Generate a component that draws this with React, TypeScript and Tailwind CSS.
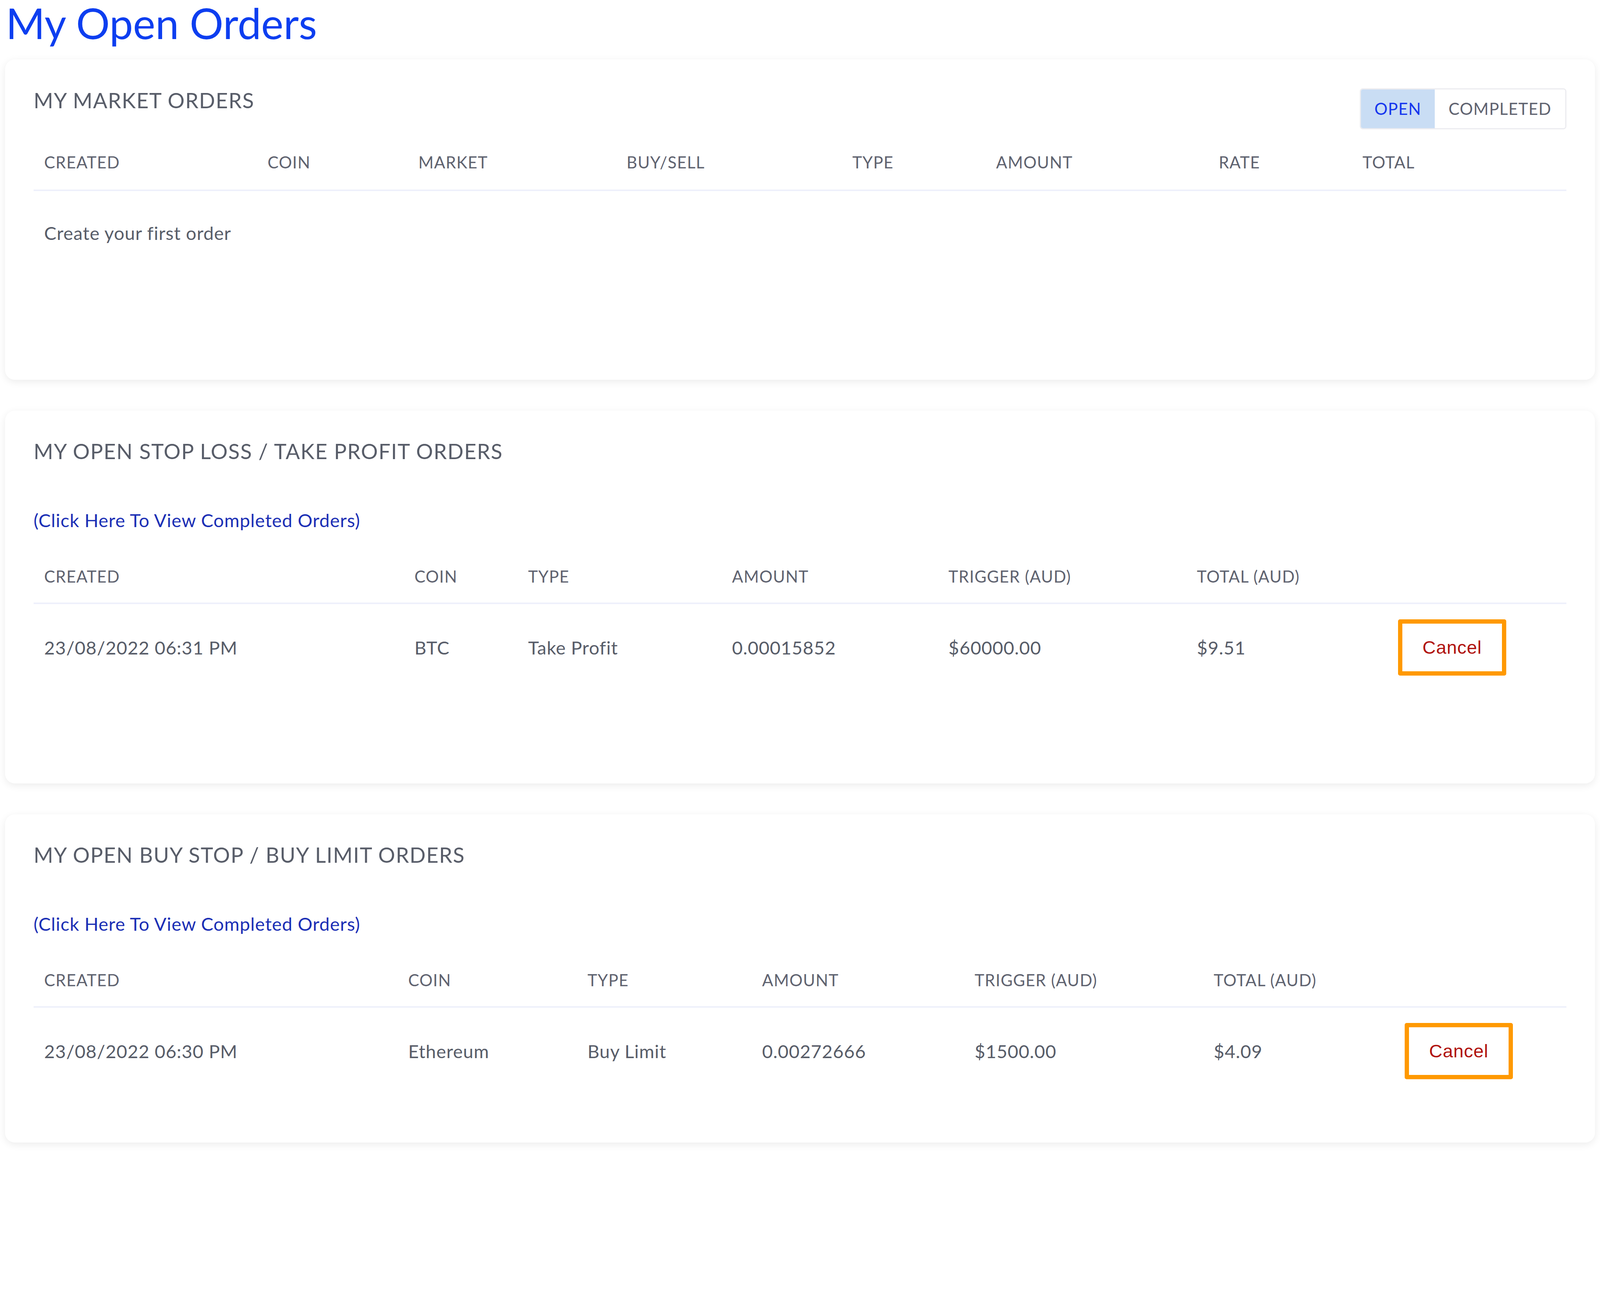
const font = { fontFamily: "Lato, 'Open Sans', sans-serif" };

const marketCols = ["CREATED", "COIN", "MARKET", "BUY/SELL", "TYPE", "AMOUNT", "RATE", "TOTAL"];

function CancelButton() {
  return (
    <div className="flex h-[144px] w-[277px] items-center justify-center rounded-[5px] border-[11px] border-[#ff9900] bg-white">
      <span className="text-[47px] text-[#b0100c]" style={{ fontFamily: "'Liberation Sans', Arial, sans-serif" }}>
        Cancel
      </span>
    </div>
  );
}

function Card({ children, className }: { children: React.ReactNode; className: string }) {
  return (
    <div className={`rounded-[25px] bg-white px-[73px] shadow-[0_5px_20px_rgba(0,0,0,0.08)] ${className}`}>
      {children}
    </div>
  );
}

interface OrderTableProps {
  title: string;
  cols: string[];
  template: string;
  row: string[];
}

function OrderCard({ title, cols, template, row, className }: OrderTableProps & { className: string }) {
  return (
    <Card className={className}>
      <h2 className="pt-[77px] text-[54px] leading-none tracking-[0.03em] text-[#585d69]">{title}</h2>
      <a className="mt-[126px] block text-[47px] leading-none tracking-[0.02em] text-[#1b2fb5]">
        (Click Here To View Completed Orders)
      </a>
      <div className={`mt-[99px] grid ${template} border-b-4 border-[#eef0fb] pb-[46px] pl-[27px] text-[42px] leading-none tracking-[0.03em] text-[#5f6370]`}>
        {cols.map((c) => (
          <div key={c}>{c}</div>
        ))}
      </div>
      <div className={`grid ${template} items-center pl-[27px] pt-[39px] text-[47px] tracking-[0.02em] text-[#585d69]`}>
        {row.map((c, i) => (
          <div key={i}>{c}</div>
        ))}
        <CancelButton />
      </div>
    </Card>
  );
}

export default function App() {
  return (
    <div className="min-h-screen w-full overflow-hidden bg-white" style={font}>
      <h1 className="pl-[15px] pt-[4px] text-[108px] leading-[108px] text-[#0d3ef0]">My Open Orders</h1>
      <div className="mx-[13px] mt-[40px] flex flex-col gap-[79px]">
        <Card className="h-[820px]">
          <div className="flex items-start justify-between pt-[74px]">
            <h2 className="pt-[4px] text-[54px] leading-none tracking-[0.03em] text-[#585d69]">MY MARKET ORDERS</h2>
            <div className="flex h-[105px] overflow-hidden rounded-[8px] border-[3px] border-[#ececf0] text-[42px] tracking-[0.03em]">
              <div className="flex w-[189px] items-center justify-center bg-[#c9ddf4] text-[#1637ee]">OPEN</div>
              <div className="flex w-[334px] items-center justify-center bg-white text-[#5f6370]">COMPLETED</div>
            </div>
          </div>
          <div className="mt-[63px] grid grid-cols-[572px_386px_533px_578px_368px_570px_368px_1fr] border-b-4 border-[#eef0fb] pb-[49px] pl-[27px] text-[42px] leading-none tracking-[0.03em] text-[#5f6370]">
            {marketCols.map((c) => (
              <div key={c}>{c}</div>
            ))}
          </div>
          <p className="pl-[27px] pt-[84px] text-[47px] leading-none tracking-[0.02em] text-[#585d69]">Create your first order</p>
        </Card>
        <OrderCard
          className="h-[954px]"
          title="MY OPEN STOP LOSS / TAKE PROFIT ORDERS"
          cols={["CREATED", "COIN", "TYPE", "AMOUNT", "TRIGGER (AUD)", "TOTAL (AUD)"]}
          template="grid-cols-[948px_291px_522px_554px_636px_515px_1fr]"
          row={["23/08/2022 06:31 PM", "BTC", "Take Profit", "0.00015852", "$60000.00", "$9.51"]}
        />
        <OrderCard
          className="h-[840px]"
          title="MY OPEN BUY STOP / BUY LIMIT ORDERS"
          cols={["CREATED", "COIN", "TYPE", "AMOUNT", "TRIGGER (AUD)", "TOTAL (AUD)"]}
          template="grid-cols-[932px_459px_447px_544px_612px_489px_1fr]"
          row={["23/08/2022 06:30 PM", "Ethereum", "Buy Limit", "0.00272666", "$1500.00", "$4.09"]}
        />
      </div>
    </div>
  );
}
